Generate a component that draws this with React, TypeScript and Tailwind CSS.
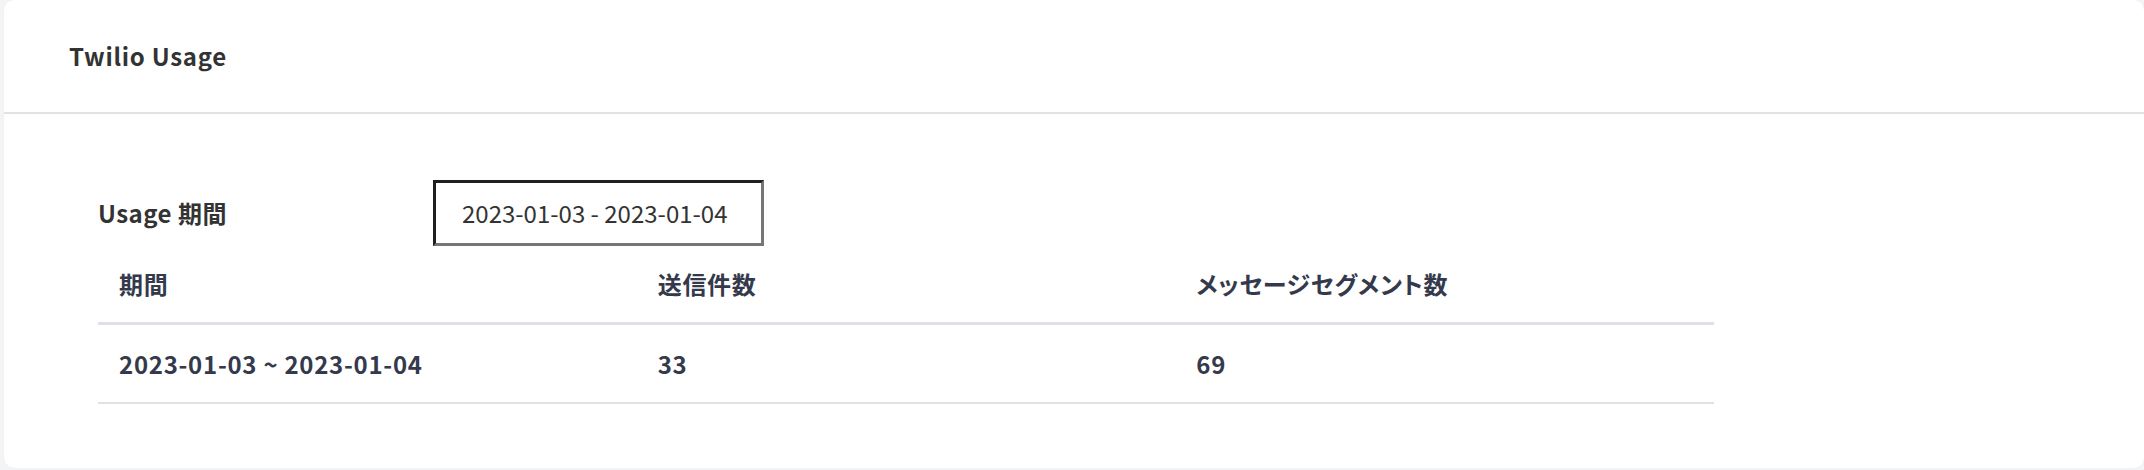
import React from "react";

const font = { fontFamily: '"Noto Sans CJK JP", "Noto Sans", sans-serif' };

export default function App() {
  return (
    <div className="w-[2144px] h-[470px] bg-[#f2f4f6] pl-[4px] pb-[2px]" style={font}>
      <div className="h-full bg-white rounded-[10px] flex flex-col shadow-[0_0_1px_rgba(0,0,0,0.08)]">
        <div className="h-[114px] shrink-0 border-b-2 border-[#e2e2e2] flex items-center pl-[65px]">
          <h1 className="text-[24px] font-bold tracking-[0.03em] text-[#333333] leading-none">Twilio Usage</h1>
        </div>
        <div className="pl-[94px] pt-[66px]">
          <div className="flex items-center">
            <div className="w-[335px] text-[24px] font-bold tracking-[0.02em] text-[#333333] leading-none">
              Usage 期間
            </div>
            <div className="w-[331px] h-[66px] border-[3px] border-t-[#1f1f1f] border-l-[#1f1f1f] border-b-[#767676] border-r-[#767676] flex items-center pl-[26px] text-[24px] text-[#333333] leading-none">
              2023-01-03 - 2023-01-04
            </div>
          </div>
          <div className="w-[1616px] text-[#343a4b] font-bold">
            <div className="grid grid-cols-3 h-[79px] border-b-[3px] border-[#dee2e6] items-center text-[24px] tracking-[0.03em] [font-feature-settings:'palt']">
              <div className="pl-[21px]">期間</div>
              <div className="pl-[21px]">送信件数</div>
              <div className="pl-[21px]">メッセージセグメント数</div>
            </div>
            <div className="grid grid-cols-3 h-[79px] border-b-2 border-[#dee2e6] items-center text-[24px] tracking-[0.03em]">
              <div className="pl-[21px]">2023-01-03 ~ 2023-01-04</div>
              <div className="pl-[21px]">33</div>
              <div className="pl-[21px]">69</div>
            </div>
          </div>
        </div>
      </div>
    </div>
  );
}
